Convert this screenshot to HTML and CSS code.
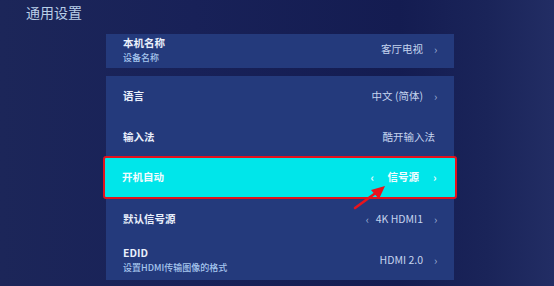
FILE: index.html
```html
<!DOCTYPE html>
<html lang="zh-CN">
<head>
<meta charset="utf-8">
<title>通用设置</title>
<link rel="stylesheet" href="styles.css">
</head>
<body>
<div class="screen">
  <h1 class="title">通用设置</h1>
  <div class="cards">
    <div class="card card-name">
      <div class="row">
        <div class="label-group">
          <div class="label">本机名称</div>
          <div class="sub">设备名称</div>
        </div>
        <div class="value raised">客厅电视<span class="chev">›</span></div>
      </div>
    </div>
    <div class="card card-list">
      <div class="row"><div class="label">语言</div><div class="value">中文 (简体)<span class="chev">›</span></div></div>
      <div class="row"><div class="label">输入法</div><div class="value plain">酷开输入法</div></div>
      <div class="row focus"><div class="label">开机自动</div><div class="value"><span class="chev left wide">‹</span>信号源<span class="chev wide">›</span></div></div>
      <div class="row"><div class="label">默认信号源</div><div class="value"><span class="chev left">‹</span>4K HDMI1<span class="chev">›</span></div></div>
      <div class="row">
        <div class="label-group">
          <div class="label">EDID</div>
          <div class="sub">设置HDMI传输图像的格式</div>
        </div>
        <div class="value">HDMI 2.0<span class="chev">›</span></div>
      </div>
    </div>
  </div>
  <svg class="arrow" width="40" height="30" viewBox="0 0 40 30">
    <line x1="5" y1="27" x2="27" y2="11" stroke="#e8141c" stroke-width="2.6" stroke-linecap="round"/>
    <polygon points="35,5 21,9 29,18" fill="#e8141c"/>
  </svg>
</div>
</body>
</html>
```
FILE: styles.css
```css
* { box-sizing: border-box; margin: 0; padding: 0; }
html, body { width: 554px; height: 286px; overflow: hidden; }
body {
  font-family: "Noto Sans CJK SC", "Noto Sans", sans-serif;
  background: linear-gradient(90deg, #1c2659 0%, #182158 35%, #141c51 72%, #1a2459 88%, #222d64 100%);
  color: #e8eefa;
}
.screen { position: relative; width: 554px; height: 286px; }
.title {
  font-size: 14px;
  font-weight: 400;
  color: #b9cfe8;
  line-height: 20px;
  padding: 2px 0 0 26px;
  height: 34px;
}
.cards { margin-left: 106px; width: 348px; display: flex; flex-direction: column; gap: 8px; }
.card { background: #243a7c; }
.card-name { height: 34px; }
.card-name .row { height: 34px; }
.card-list { height: 204px; display: flex; flex-direction: column; }
.card-list .row { height: 40.8px; }
.row {
  display: flex;
  align-items: center;
  justify-content: space-between;
  padding: 0 16px 0 17px;
}
.label { font-size: 10.5px; font-weight: 700; line-height: 14px; color: #e9effb; }
.label-group .sub { font-size: 9px; line-height: 13px; color: #a6c6ee; font-weight: 500; margin-top: 1px; }
.card-name .label-group { margin-top: -3px; }
.value { font-size: 10.5px; line-height: 14px; color: #c4d4ee; display: flex; align-items: center; }
.value.raised { margin-top: -4px; }
.value.plain { margin-right: 3px; }
.chev { font-size: 11px; color: #9fb3d6; margin-left: 11px; display: inline-block; width: 4px; }
.chev.left { margin-left: 0; margin-right: 6px; }
.chev.wide { margin-left: 14px; }
.chev.left.wide { margin-left: 0; margin-right: 13px; }
.row.focus {
  background: #00e6ea;
  border: 2px solid #e2121c;
  border-radius: 3px;
  margin: -2px -3px -1px -3px;
  height: 43.8px !important;
  padding: 0 18px 0 17px;
}
.row.focus .label, .row.focus .value { color: #f2fcff; font-weight: 700; }
.row.focus .chev { color: #e6fbff; }
.arrow { position: absolute; left: 350px; top: 181px; }
```
